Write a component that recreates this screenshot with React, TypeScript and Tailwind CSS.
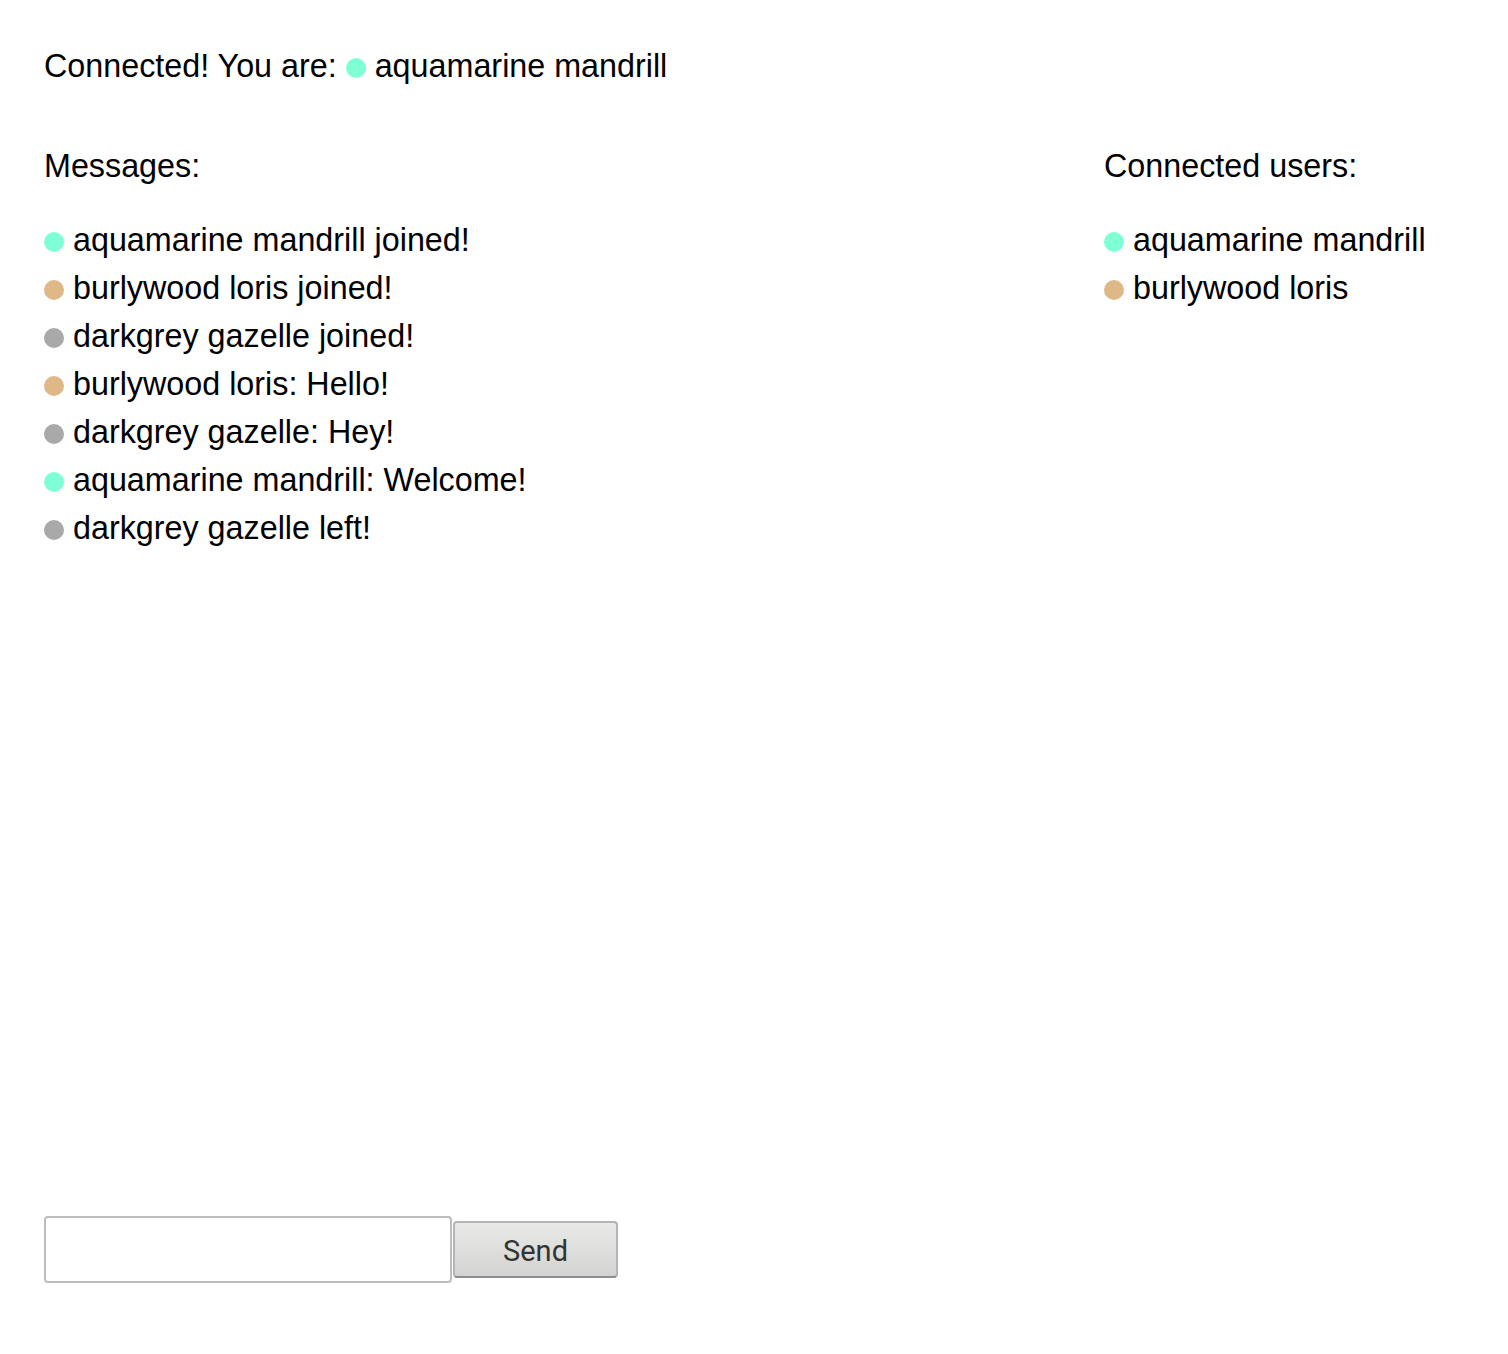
import React from "react";

const AQUA = "#7fffd4";
const BURLY = "#deb887";
const GREY = "#a9a9a9";

const messages: { color: string; text: string }[] = [
  { color: AQUA, text: "aquamarine mandrill joined!" },
  { color: BURLY, text: "burlywood loris joined!" },
  { color: GREY, text: "darkgrey gazelle joined!" },
  { color: BURLY, text: "burlywood loris: Hello!" },
  { color: GREY, text: "darkgrey gazelle: Hey!" },
  { color: AQUA, text: "aquamarine mandrill: Welcome!" },
  { color: GREY, text: "darkgrey gazelle left!" },
];

const users = [
  { color: AQUA, text: "aquamarine mandrill" },
  { color: BURLY, text: "burlywood loris" },
];

function Dot({ color }: { color: string }) {
  return (
    <span
      className="inline-block w-[20px] h-[20px] rounded-full align-[-1px]"
      style={{ backgroundColor: color }}
    />
  );
}

export default function App() {
  return (
    <div
      className="min-h-[1354px] bg-white text-black px-[44px] pt-[42px] text-[32.3px] leading-[48px]"
      style={{ fontFamily: '"Liberation Sans", Arial, sans-serif' }}
    >
      <div>
        Connected! You are: <Dot color={AQUA} /> aquamarine mandrill
      </div>
      <div className="flex mt-[52px] h-[1074px]">
        <div className="flex-1">
          <div>Messages:</div>
          <ul className="mt-[26px]">
            {messages.map((m, i) => (
              <li key={i}>
                <Dot color={m.color} /> {m.text}
              </li>
            ))}
          </ul>
        </div>
        <div className="w-[360px]">
          <div>Connected users:</div>
          <ul className="mt-[26px]">
            {users.map((u, i) => (
              <li key={i}>
                <Dot color={u.color} /> {u.text}
              </li>
            ))}
          </ul>
        </div>
      </div>
      <div className="flex items-center">
        <input
          type="text"
          className="w-[408px] h-[67px] border-2 border-[#bdbdbd] rounded-[4px] bg-white px-2 outline-none"
        />
        <button
          className="ml-[1px] w-[165px] h-[57px] rounded-[4px] border-2 border-[#b5b5b5] border-b-[#8e8e8e] bg-gradient-to-b from-[#e9e9e7] to-[#d3d3d1] text-[#333] text-[29px] leading-none pt-[4px]"
          style={{ fontFamily: "Roboto, sans-serif" }}
        >
          Send
        </button>
      </div>
    </div>
  );
}
